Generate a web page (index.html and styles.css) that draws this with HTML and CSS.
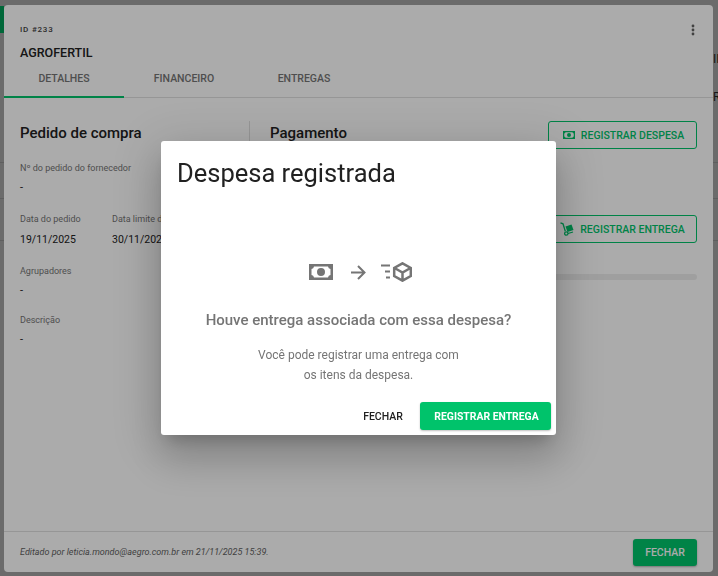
FILE: index.html
```html
<!DOCTYPE html>
<html lang="pt-BR">
<head>
<meta charset="utf-8">
<title>Despesa registrada</title>
<link rel="stylesheet" href="styles.css">
</head>
<body>
<div class="backdrop-marks">
  <span class="mark-green"></span>
  <span class="mark-line mark-l1"></span>
  <span class="mark-line mark-l2"></span>
  <span class="mark-line mark-l3"></span>
  <span class="mark-r mark-r1">II</span>
  <span class="mark-r mark-r2">R</span>
</div>
<main class="panel">
  <header class="panel-head">
    <div class="panel-id">ID #233</div>
    <div class="panel-name">AGROFERTIL</div>
    <svg class="kebab" width="4" height="12" viewBox="0 0 4 12"><circle cx="2" cy="2" r="1.400"/><circle cx="2" cy="6" r="1.400"/><circle cx="2" cy="10" r="1.400"/></svg>
  </header>
  <nav class="tabs">
    <div class="tab tab-active">DETALHES</div>
    <div class="tab">FINANCEIRO</div>
    <div class="tab">ENTREGAS</div>
  </nav>
  <section class="content">
    <div class="col-left">
      <h2 class="section-title">Pedido de compra</h2>
      <div class="field field-first">
        <div class="label">Nº do pedido do fornecedor</div>
        <div class="value">-</div>
      </div>
      <div class="field-row">
        <div class="field field-date">
          <div class="label">Data do pedido</div>
          <div class="value value-date">19/11/2025</div>
        </div>
        <div class="field field-date">
          <div class="label">Data limite de entrega</div>
          <div class="value value-date">30/11/2025</div>
        </div>
      </div>
      <div class="field field-group">
        <div class="label">Agrupadores</div>
        <div class="value">-</div>
      </div>
      <div class="field field-desc">
        <div class="label">Descrição</div>
        <div class="value">-</div>
      </div>
    </div>
    <div class="col-right">
      <div class="pay-head">
        <h2 class="section-title">Pagamento</h2>
        <button class="outline-btn">
          <svg class="icon-bill" width="12" height="8" viewBox="0 0 24 16"><path fill-rule="evenodd" d="M0 0h24v16H0zM5 2.500H19A3 3 0 0 0 21.500 5V11A3 3 0 0 0 19 13.500H5A3 3 0 0 0 2.500 11V5A3 3 0 0 0 5 2.500zM12 4a4 4 0 1 1 0 8a4 4 0 0 1 0-8z"/></svg>
          REGISTRAR DESPESA
        </button>
      </div>
      <div class="deliver-row">
        <button class="outline-btn outline-btn-deliver">
          <svg class="icon-cart" width="14" height="14" viewBox="0 0 14 14"><path class="cart-line" d="M0.500 0.800l2.500 1 2.300 7.500M8 11.500l5-1.500"/><circle class="cart-line" cx="6.300" cy="11.500" r="1.700"/><path class="cart-box" d="M5.500 4.500l6-2 2 5.500-6 2z"/></svg>
          REGISTRAR ENTREGA
        </button>
      </div>
      <div class="progress"></div>
    </div>
  </section>
  <footer class="panel-foot">
    <span class="edited">Editado por leticia.mondo@aegro.com.br em 21/11/2025 15:39.</span>
    <button class="close-btn">FECHAR</button>
  </footer>
</main>
<div class="scrim"></div>
<div class="dialog" role="dialog">
  <h1 class="dialog-title">Despesa registrada</h1>
  <div class="dialog-body">
    <div class="flow-icons">
      <svg width="24" height="16" viewBox="0 0 24 16"><path fill="#757575" fill-rule="evenodd" d="M0 0h24v16H0zM5 2.500H19A3 3 0 0 0 21.500 5V11A3 3 0 0 0 19 13.500H5A3 3 0 0 0 2.500 11V5A3 3 0 0 0 5 2.500zM12 4a4 4 0 1 1 0 8a4 4 0 0 1 0-8z"/></svg>
      <svg class="flow-arrow" width="15" height="15" viewBox="0 0 15 15"><path d="M0 7.500h14M7 1l6.500 6.500-6.500 6.500" fill="none" stroke="#757575" stroke-width="2"/></svg>
      <svg width="31" height="20" viewBox="0 0 31 20"><path d="M0 3.500h9M4 9.500h5M5 15.500h4" fill="none" stroke="#757575" stroke-width="2.200"/><path d="M21.500 1.300L29.800 6V14L21.500 18.700L13.200 14V6ZM13.500 6L21.500 10.500L29.500 6M21.500 10.500V19" fill="none" stroke="#757575" stroke-width="2.500"/></svg>
    </div>
    <div class="dialog-question">Houve entrega associada com essa despesa?</div>
    <p class="dialog-text">Você pode registrar uma entrega com<br>os itens da despesa.</p>
  </div>
  <div class="dialog-actions">
    <button class="text-btn">FECHAR</button>
    <button class="primary-btn">REGISTRAR ENTREGA</button>
  </div>
</div>
</body>
</html>
```
FILE: styles.css
```css
* { box-sizing: border-box; }
html, body { margin: 0; height: 100%; }
body {
  width: 718px;
  height: 576px;
  overflow: hidden;
  background: #a0a0a0;
  font-family: Roboto, "Liberation Sans", sans-serif;
  color: #212121;
  padding: 5px 5px 4px 4px;
  position: relative;
}
button { font-family: inherit; cursor: pointer; }
h1, h2, p { margin: 0; font-weight: 400; }

.backdrop-marks span { position: absolute; }
.mark-green { left: 0; top: 6px; width: 4px; height: 27px; background: #009a56; }
.mark-line { left: 0; width: 718px; height: 1px; background: #8c8c8c; }
.mark-l1 { top: 162px; }
.mark-l2 { top: 198px; }
.mark-l3 { top: 240px; }
.mark-r { left: 713px; font-size: 12px; color: #212121; }
.mark-r1 { top: 52px; }
.mark-r2 { top: 90px; }

.panel {
  height: 567px;
  background: #fff;
  border-radius: 4px;
  display: flex;
  flex-direction: column;
  position: relative;
}
.panel-head { position: relative; padding: 19px 16px 0; height: 55px; }
.panel-id { font-size: 8px; line-height: 12px; letter-spacing: .8px; font-weight: 500; color: #424242; }
.panel-name { font-size: 12.500px; line-height: 16px; margin-top: 9px; color: #212121; font-weight: 500; }
.kebab { position: absolute; right: 18px; top: 19px; fill: #616161; }

.tabs { display: flex; height: 38px; border-bottom: 1px solid #e0e0e0; }
.tab {
  width: 120px;
  height: 38px;
  text-align: center;
  font-size: 10.500px;
  line-height: 38px;
  color: #757575;
  font-weight: 500;
}
.tab-active { border-bottom: 2px solid #00c36b; }

.content { flex: 1; display: flex; padding-top: 23px; }
.col-left { width: 246px; padding-left: 16px; position: relative; }
.col-left::after {
  content: "";
  position: absolute;
  right: 0;
  top: 0;
  width: 1px;
  height: 27px;
  background: #e0e0e0;
}
.col-right { flex: 1; padding: 0 16px 0 20px; }
.section-title { font-size: 15px; line-height: 26px; font-weight: 500; color: #212121; margin: -1px 0 1px; }
.field { margin-top: 16px; height: 34px; }
.field-first { margin-top: 16px; }
.field-group { margin-top: 18px; }
.field-desc { margin-top: 15px; }
.label { font-size: 9px; line-height: 12px; color: #757575; }
.value { font-size: 11px; line-height: 14px; margin-top: 7px; color: #212121; }
.field-row { display: flex; margin-top: 17px; }
.field-row .field { margin-top: 0; }
.field-date { width: 92px; white-space: nowrap; }
.value-date { font-size: 10.500px; margin-top: 8px; }

.pay-head { display: flex; justify-content: space-between; align-items: flex-start; }
.outline-btn {
  display: flex;
  align-items: center;
  justify-content: center;
  gap: 6px;
  width: 149px;
  height: 28px;
  border: 1px solid #00c36b;
  border-radius: 3px;
  background: #fff;
  color: #00c36b;
  font-size: 10.500px;
  font-weight: 500;
  padding: 0 0 0 2px;
}
.outline-btn-deliver { padding-left: 0; }
.icon-bill { fill: #00c36b; }
.cart-line { fill: none; stroke: #00c36b; stroke-width: 1.300; }
.cart-box { fill: #00c36b; }
.deliver-row { display: flex; justify-content: flex-end; margin-top: 66px; }
.progress { margin-top: 31px; height: 6px; border-radius: 3px; background: #eee; }

.panel-foot {
  height: 41px;
  border-top: 1px solid #e0e0e0;
  display: flex;
  align-items: center;
  justify-content: space-between;
  padding: 0 16px;
}
.edited { font-size: 9px; font-style: italic; color: #616161; }
.close-btn {
  width: 64px;
  height: 27px;
  margin-top: 1px;
  border: 0;
  border-radius: 3px;
  background: #00c36b;
  color: #fff;
  font-size: 10.500px;
  font-weight: 500;
  box-shadow: 0 1px 2px rgba(0,0,0,.3);
}

.scrim {
  position: fixed;
  inset: 0;
  background: rgba(0,0,0,.33);
  backdrop-filter: blur(.5px);
}
.dialog {
  position: absolute;
  left: 161px;
  top: 141px;
  width: 395px;
  height: 294px;
  background: #fff;
  border-radius: 3px;
  box-shadow: 0 11px 15px -7px rgba(0,0,0,.2), 0 24px 38px 3px rgba(0,0,0,.14), 0 9px 46px 8px rgba(0,0,0,.12);
  display: flex;
  flex-direction: column;
}
.dialog-title { font-size: 25.500px; line-height: 32px; padding: 16px 16px 0; color: #212121; }
.dialog-body { flex: 1; display: flex; flex-direction: column; align-items: center; padding-top: 73px; }
.flow-icons { display: flex; align-items: center; height: 20px; padding-left: 4px; }
.flow-arrow { margin: 0 15px 0 18px; }
.dialog-question { margin-top: 28px; font-size: 15px; line-height: 20px; font-weight: 500; color: #757575; }
.dialog-text { margin-top: 15px; font-size: 12px; line-height: 20px; text-align: center; color: #757575; }
.dialog-actions { display: flex; justify-content: flex-end; align-items: center; gap: 3px; padding: 0 5px 5px; }
.text-btn {
  width: 68px;
  height: 28px;
  border: 0;
  background: transparent;
  font-size: 10.500px;
  font-weight: 500;
  color: #212121;
}
.primary-btn {
  width: 131px;
  height: 28px;
  border: 0;
  border-radius: 3px;
  padding: 0 0 0 2px;
  background: #00c36b;
  color: #fff;
  font-size: 10.400px;
  font-weight: 700;
  box-shadow: 0 1px 2px rgba(0,0,0,.25);
}
```
